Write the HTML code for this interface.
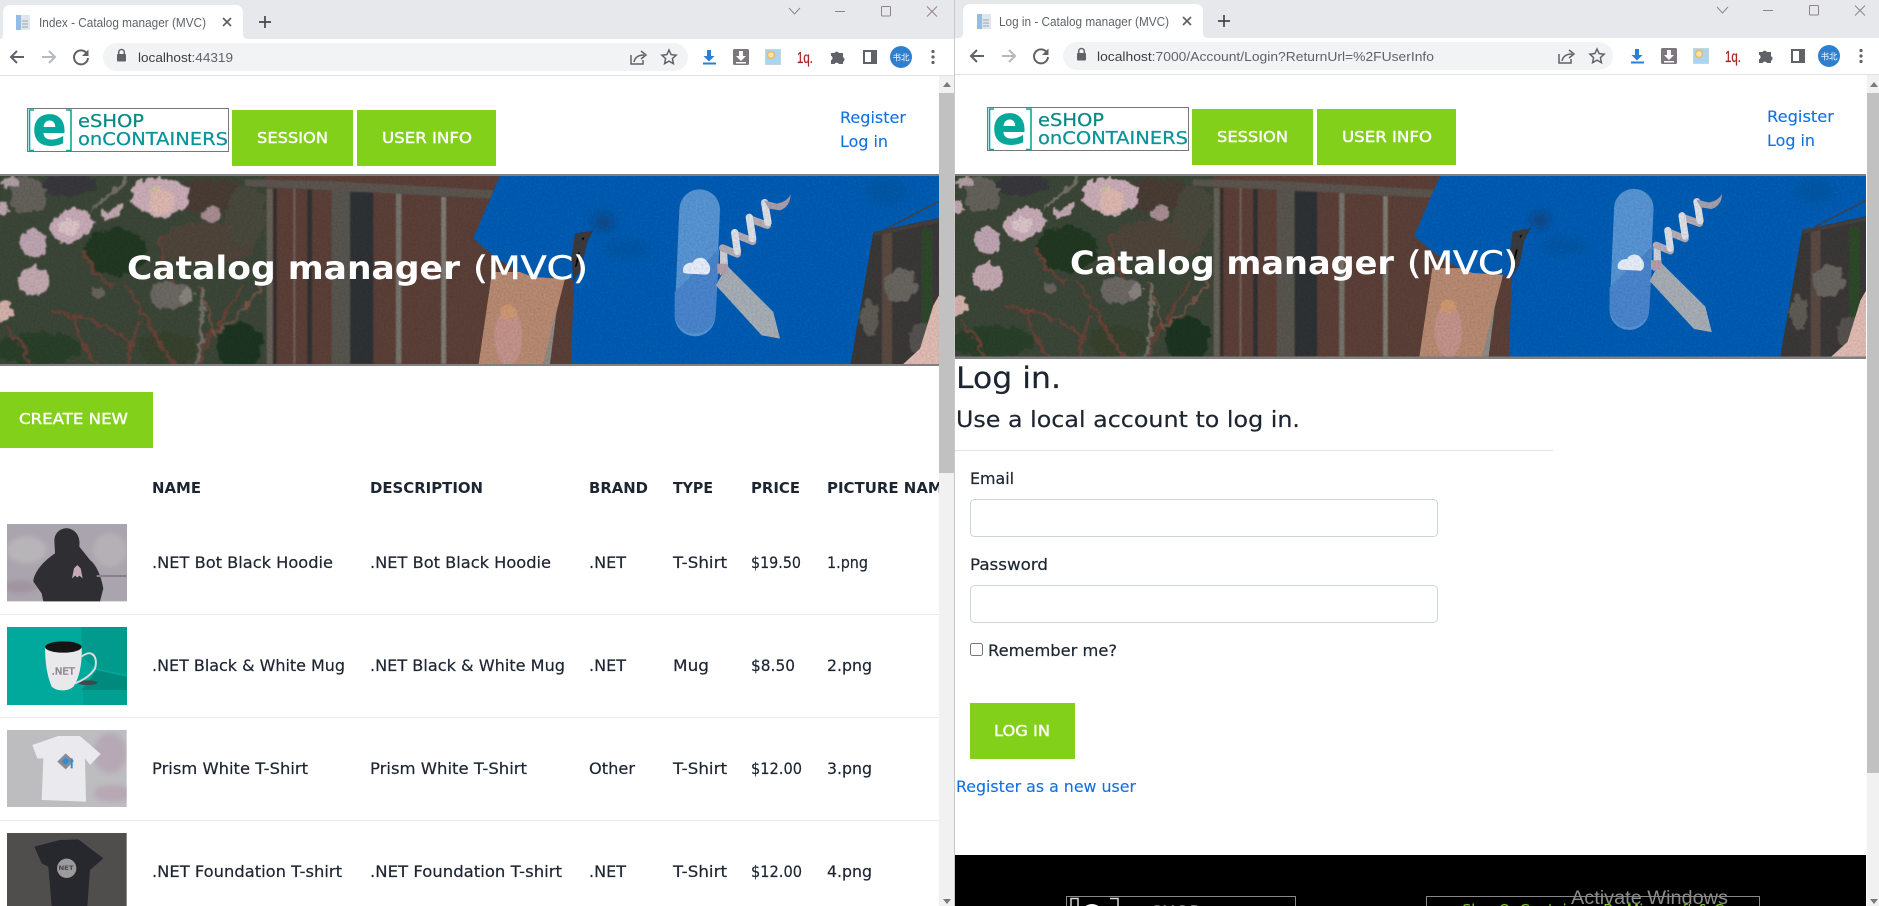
<!DOCTYPE html>
<html lang="en"><head><meta charset="utf-8"><title>Catalog manager (MVC)</title>
<style>
html,body{margin:0;padding:0;background:#fff;width:1879px;height:906px;overflow:hidden}
svg{display:block}
text{font-family:"DejaVu Sans","Liberation Sans",sans-serif;white-space:pre}
.c{font-family:"Liberation Sans",sans-serif;font-size:13px;fill:#5f6368}
.b{font-size:16px;fill:#1d2530;stroke:#1d2530;stroke-width:.2}
.h{font-size:15.5px;font-weight:700;fill:#1d2530}
.w{font-size:15.5px;fill:#fff;stroke:#fff;stroke-width:.4}
.l{font-size:16px;fill:#1271e0;stroke:#1271e0;stroke-width:.12}
.t{fill:#fff;font-size:32px}
.ic{fill:none;stroke:#5f6368;stroke-width:1.5}
</style></head><body>
<svg width="1879" height="906" viewBox="0 0 1879 906" xmlns="http://www.w3.org/2000/svg">
<defs>
<filter id="grain" x="0" y="0" width="100%" height="100%"><feTurbulence type="fractalNoise" baseFrequency="0.5" numOctaves="2" seed="4"/><feColorMatrix values="0 0 0 0 0  0 0 0 0 0  0 0 0 0 0  0 0 0 .9 -.28"/></filter>
<filter id="org" x="-5%" y="-5%" width="110%" height="110%"><feTurbulence type="fractalNoise" baseFrequency=".035" numOctaves="3" seed="7" result="n"/><feDisplacementMap in="SourceGraphic" in2="n" scale="34" xChannelSelector="R" yChannelSelector="G"/><feGaussianBlur stdDeviation="2"/></filter>
<filter id="sb" x="-5%" y="-5%" width="110%" height="110%"><feGaussianBlur stdDeviation="2.2"/></filter>
<filter id="sb2" x="-30%" y="-30%" width="160%" height="160%"><feGaussianBlur stdDeviation="14"/></filter>
<filter id="sb3" x="-30%" y="-30%" width="160%" height="160%"><feGaussianBlur stdDeviation="7"/></filter>
<clipPath id="hc"><rect x="0" y="12" width="2817" height="564"/></clipPath>
<clipPath id="th1"><rect x="21" y="72" width="360" height="232"/></clipPath>
<clipPath id="th3"><rect x="21" y="690" width="359" height="231"/></clipPath>
<g id="hero" clip-path="url(#hc)">
 <rect x="0" y="12" width="830" height="564" fill="#3c4738"/>
 <g filter="url(#org)">
 <ellipse cx="85" cy="70" rx="55" ry="55" fill="#65625c"/>
 <ellipse cx="210" cy="40" rx="85" ry="30" fill="#38393c"/>
 <ellipse cx="345" cy="240" rx="95" ry="70" fill="#203722"/>
 <ellipse cx="120" cy="530" rx="130" ry="50" fill="#2a4029"/>
 <ellipse cx="720" cy="520" rx="70" ry="70" fill="#1f3520"/>
 <ellipse cx="620" cy="70" rx="120" ry="50" fill="#4a3d36"/>
 <ellipse cx="620" cy="215" rx="150" ry="65" fill="#50443b"/>
 <ellipse cx="740" cy="130" rx="60" ry="90" fill="#4a4a3c"/>
 <ellipse cx="500" cy="530" rx="90" ry="50" fill="#38422f"/>
 <g fill="none" stroke="#6b4338" stroke-width="9">
  <path d="M380 340 C440 440 470 500 520 576M730 340 C680 430 620 500 600 576M160 420 C260 430 330 470 400 510M220 440 C240 500 270 550 290 576M640 470 C610 500 600 540 590 576M480 190 C480 260 500 300 530 340M20 470 C60 500 80 540 90 576M420 450 C400 490 390 540 385 576M250 240 C270 290 290 310 340 340"/>
  <path d="M590 340 C620 400 640 450 650 500M790 320 C760 390 720 420 650 480" stroke="#7a5448" stroke-width="7"/>
 </g>
 <g fill="none" stroke="#737068" stroke-width="10"><path d="M380 20 C340 60 320 80 270 110M610 350 C600 430 610 500 590 576"/></g>
 <ellipse cx="30" cy="30" rx="26" ry="16" fill="#b3a0a4"/><ellipse cx="10" cy="108" rx="18" ry="20" fill="#c0a8b0"/>
 <ellipse cx="335" cy="122" rx="38" ry="15" transform="rotate(-25 335 122)" fill="#c2a8b1"/>
 <ellipse cx="480" cy="75" rx="88" ry="58" fill="#cbaeb8"/>
 <ellipse cx="485" cy="90" rx="42" ry="36" fill="#deb9b1"/><ellipse cx="465" cy="52" rx="12" ry="9" fill="#cfc09b"/>
 <ellipse cx="215" cy="160" rx="66" ry="48" transform="rotate(-20 215 160)" fill="#c8acb7"/>
 <ellipse cx="205" cy="165" rx="32" ry="24" fill="#dcc5c9"/>
 <ellipse cx="100" cy="215" rx="38" ry="42" fill="#bfa6b2"/>
 <ellipse cx="102" cy="330" rx="48" ry="42" fill="#c4a9b1"/>
 <ellipse cx="10" cy="420" rx="28" ry="30" fill="#d6b2ab"/>
 <ellipse cx="635" cy="128" rx="30" ry="22" fill="#a98e92"/>
 <ellipse cx="510" cy="370" rx="65" ry="42" fill="#6c6864"/><ellipse cx="560" cy="375" rx="22" ry="18" fill="#8a847f"/>
 <ellipse cx="295" cy="365" rx="20" ry="18" fill="#67635d"/>
 </g>
 <g filter="url(#sb)">
 <rect x="800" y="0" width="950" height="600" fill="#5c3f37"/>
 <rect x="800" y="50" width="18" height="526" fill="#666259"/>
 <rect x="820" y="50" width="10" height="526" fill="#33302f"/>
 <rect x="922" y="50" width="14" height="526" fill="#2f3234"/>
 <rect x="995" y="30" width="55" height="546" fill="#585650"/>
 <rect x="1050" y="60" width="70" height="516" fill="#2d3035"/>
 <rect x="1188" y="65" width="16" height="511" fill="#77746c"/>
 <rect x="1324" y="75" width="14" height="501" fill="#807d75"/>
 <rect x="880" y="50" width="6" height="526" fill="#76645b"/>
 <path d="M735 22 L1000 28 L1480 55 L1480 80 L1000 55 L735 42Z" fill="#5c5750"/>
 <rect x="2530" y="0" width="300" height="600" fill="#3a3937"/>
 <rect x="2646" y="170" width="30" height="420" fill="#5a4c43"/>
 <rect x="2765" y="170" width="32" height="300" fill="#2e4a2c"/>
 </g>
 <g filter="url(#org)">
 <ellipse cx="2700" cy="340" rx="50" ry="50" fill="#696560"/>
 <ellipse cx="2610" cy="440" rx="26" ry="55" fill="#5f5b55"/><ellipse cx="2760" cy="500" rx="30" ry="50" fill="#575350"/>
 </g>
 <path d="M2710 576 L2760 530 L2800 400 L2817 370 L2817 576Z" fill="#e2bdb4"/>
 <path d="M1436 576 L1476 300 L1700 300 L1630 576Z" fill="#b98b73"/>
 <g filter="url(#sb)"><ellipse cx="1525" cy="495" rx="42" ry="85" fill="#c5948c"/><ellipse cx="1525" cy="420" rx="25" ry="22" fill="#cf9a72"/></g>
 <path d="M1630 576 L1672 400 L1650 576Z" fill="#8f8c86"/>
 <path d="M1500 12 L1420 198 Q1470 250 1560 300 L1600 315 L1722 322 L1713 576 L2552 576 L2620 180 L2817 138 L2817 12Z" fill="#015db5"/>
 <path d="M2620 180 L2817 140 L2817 152 L2625 192Z" fill="#45403e"/>
 <path d="M2660 170 L2817 88" fill="none" stroke="#3d4650" stroke-width="5"/>
 <g filter="url(#sb2)"><ellipse cx="1810" cy="150" rx="32" ry="26" fill="#0a4a88"/><ellipse cx="1880" cy="230" rx="70" ry="24" fill="#0456a6"/><ellipse cx="2660" cy="60" rx="60" ry="40" fill="#0558a8"/></g>
 <path d="M1725 185 L1780 175 L1760 215 L1745 290 L1720 330 L1715 250Z" fill="#3c3b3e"/><path d="M1745 200l8-5-3 10zM1735 240l-10 45 5-2 10-40z" fill="#000"/>
 <path fill="none" stroke="#5896d6" stroke-width="122" stroke-linecap="round" d="M2099 113 L2085 432"/>
 <path d="M2024 360 L2158 230 L2147 430 A62 62 0 0 1 2024 432Z" fill="#4a86cf"/>
 <path d="M2148 340 L2180 280 L2320 420 L2340 500 L2285 490Z" fill="#a8afb7"/>
 <path d="M2160 235 L2180 220 L2185 290 L2160 310Z" fill="#cfd2d8"/><path d="M2152 275h32v30h-32z" fill="#b79faa"/>
 <g fill="none" stroke-width="22" stroke-linecap="round">
  <path stroke="#b5adb8" d="M2168 228 L2212 246M2208 188 L2258 208M2252 142 L2302 160"/>
  <path stroke="#dfe2e8" d="M2204 182 L2212 238M2248 136 L2258 200M2294 92 L2304 152"/>
 </g>
 <path d="M2292 85 L2330 95 Q2360 90 2372 68 Q2370 105 2340 115 L2306 110Z" fill="#aaa1ac"/>
 <path d="M2050 302 C2045 282 2060 270 2078 272 C2082 258 2110 248 2122 270 C2135 282 2132 305 2120 308 L2060 305Z" fill="#e7f0fc"/>
</g>
</defs>

<!-- browser chrome left -->
<rect width="955" height="39" fill="#e7e8eb"/>
<rect y="39" width="955" height="36" fill="#fff"/>
<rect y="75" width="955" height="1" fill="#dfe1e4"/>
<path d="M0 39 Q3 39 3 34 V13 Q3 5 11 5 H235 Q243 5 243 13 V34 Q243 39 248 39Z" fill="#fff"/>
<rect x="16" y="15" width="14" height="15" fill="#dfe6ee"/><rect x="16" y="15" width="5" height="15" fill="#93bde8"/><path d="M22 21h6M22 24h6M22 27h6" stroke="#9aa3ad"/>
<text class="c" x="39" y="27" textLength="167" lengthAdjust="spacingAndGlyphs">Index - Catalog manager (MVC)</text>
<path d="M223 18l8 8M231 18l-8 8" stroke="#5f6368" stroke-width="1.7"/>
<path d="M265 16v12M259 22h12" stroke="#44474a" stroke-width="1.7"/>
<rect x="103" y="43" width="585" height="28" rx="14" fill="#f1f3f4"/>
<g fill="none" stroke-width="2">
 <path d="M24 57H11M17 51l-6 6 6 6" stroke="#5f6368"/><path d="M42 57H55M49 51l6 6-6 6" stroke="#b6b9bd"/>
 <path d="M86.5 53 A7 7 0 1 0 88 58" stroke="#5f6368"/>
</g>
<path d="M88.5 49.5V56H82Z" fill="#5f6368"/>
<rect x="117" y="54" width="9" height="7.5" rx="1" fill="#5f6368"/><path d="M118.7 54v-1.7a2.8 2.8 0 0 1 5.6 0V54" class="ic" stroke-width="1.2"/>
<text x="138" y="62" class="c" textLength="95" lengthAdjust="spacingAndGlyphs"><tspan fill="#3b3d40">localhost</tspan>:44319</text>

<g id="tb">
 <path class="ic" d="M631 55V64H643V60M634 62C635 57 639 55 644 55M641 51L646 55L641 59" stroke-width="1.3"/>
 <path class="ic" d="M669 50l2.1 4.6 5 .6-3.7 3.4 1 5-4.4-2.5-4.4 2.5 1-5-3.7-3.4 5-.6z"/>
 <path d="M707 50h4v6h3.5L709 61.5 703.5 56H707zM703 62.5h13v2h-13z" fill="#2b7fd8"/>
 <rect x="733" y="49" width="16" height="16" rx="1.5" fill="#7b777d"/><path d="M739 51h4v5h3l-5 5-5-5h3zM736 62h10v1.5h-10z" fill="#fff"/>
 <rect x="765" y="49" width="16" height="16" fill="#a8d6ee"/><rect x="765.5" y="49.5" width="15" height="15" fill="none" stroke="#c4d6e0"/><circle cx="771" cy="55" r="3.5" fill="#f5e6a8" stroke="#efb95f" stroke-width="1.5"/>
 <text x="797" y="63" style="font-family:'Liberation Sans',sans-serif;font-size:16px;fill:#a8282a;stroke:#a8282a;stroke-width:.3" textLength="16" lengthAdjust="spacingAndGlyphs">1q.</text>
 <path d="M831 53h3.5a2.5 2.5 0 0 1 4.5 0H843v4.2a2.5 2.5 0 0 1 0 4.6V64H839a2.5 2.5 0 0 0-4.5 0H831v-3.7a2.5 2.5 0 0 0 0-4.6z" fill="#5f6368"/>
 <rect x="864" y="51" width="12" height="12" fill="none" stroke="#5f6368" stroke-width="2"/><rect x="871" y="51" width="5" height="12" fill="#5f6368"/>
 <circle cx="901" cy="57" r="11" fill="#2f7fd0"/>
 <text x="901" y="60.5" text-anchor="middle" style="font-family:'Noto Sans CJK SC',sans-serif;font-size:8.5px;fill:#fff">书北</text>
 <circle cx="933" cy="51.5" r="1.6" fill="#5f6368"/><circle cx="933" cy="57" r="1.6" fill="#5f6368"/><circle cx="933" cy="62.5" r="1.6" fill="#5f6368"/>
 <g fill="none" stroke="#8f828f" stroke-width="1">
  <path d="M789 8l5.5 6 5.5-6M835 11.5h10M927 6.5l10 10M937 6.5l-10 10"/><rect x="881.5" y="6.5" width="9" height="9.5" rx="1"/>
 </g>
</g>

<!-- left page -->
<g id="hdr">
 <rect x="27.5" y="108.5" width="201" height="43" fill="#fff" stroke="#777"/>
 <path d="M34 110H29.5V150.5H34M66 110H71V150.5H66" fill="none" stroke="#0aa79b" stroke-width="1.6"/>
 <text x="32" y="145" style="font-size:55px;font-weight:700;fill:#07a89c" textLength="35" lengthAdjust="spacingAndGlyphs">e</text>
 <text x="78" y="127" style="font-size:17.5px;fill:#0b8a86;stroke:#0b8a86;stroke-width:.25" textLength="66" lengthAdjust="spacingAndGlyphs">eSHOP</text>
 <text x="78" y="145" style="font-size:17.5px;fill:#0b939b;stroke:#0b939b;stroke-width:.25" textLength="150" lengthAdjust="spacingAndGlyphs">onCONTAINERS</text>
 <rect x="232" y="110" width="121" height="56" fill="#83d01b"/><rect x="357" y="110" width="139" height="56" fill="#83d01b"/>
 <text class="w" x="257" y="143" textLength="71" lengthAdjust="spacingAndGlyphs">SESSION</text>
 <text class="w" x="382" y="143" textLength="90" lengthAdjust="spacingAndGlyphs">USER INFO</text>
</g>
<text class="l" x="840" y="123" textLength="66" lengthAdjust="spacingAndGlyphs">Register</text>
<text class="l" x="840" y="147" textLength="48" lengthAdjust="spacingAndGlyphs">Log in</text>

<rect y="174" width="939" height="192" fill="#808080"/>
<g transform="translate(0,172) scale(.33333)"><use href="#hero"/></g>
<rect x="0" y="176" width="939" height="188" filter="url(#grain)" opacity=".22"/>
<text class="t" x="127" y="279" font-weight="700" textLength="333" lengthAdjust="spacingAndGlyphs">Catalog manager</text>
<text class="t" x="473" y="279" style="stroke:#fff;stroke-width:.5" textLength="115" lengthAdjust="spacingAndGlyphs">(MVC)</text>

<rect x="0" y="392" width="153" height="56" fill="#83d01b"/>
<text class="w" x="19" y="424" textLength="109" lengthAdjust="spacingAndGlyphs">CREATE NEW</text>

<text class="h" x="152" y="493" textLength="49" lengthAdjust="spacingAndGlyphs">NAME</text>
<text class="h" x="370" y="493" textLength="113" lengthAdjust="spacingAndGlyphs">DESCRIPTION</text>
<text class="h" x="589" y="493" textLength="59" lengthAdjust="spacingAndGlyphs">BRAND</text>
<text class="h" x="673" y="493" textLength="40" lengthAdjust="spacingAndGlyphs">TYPE</text>
<text class="h" x="751" y="493" textLength="49" lengthAdjust="spacingAndGlyphs">PRICE</text>
<text class="h" x="827" y="493" textLength="126" lengthAdjust="spacingAndGlyphs">PICTURE NAME</text>

<path d="M0 614.5H939M0 717.5H939M0 820.5H939" stroke="#e9ecef"/>

<text class="b" x="152" y="568" textLength="181" lengthAdjust="spacingAndGlyphs">.NET Bot Black Hoodie</text>
<text class="b" x="370" y="568" textLength="181" lengthAdjust="spacingAndGlyphs">.NET Bot Black Hoodie</text>
<text class="b" x="589" y="568" textLength="37" lengthAdjust="spacingAndGlyphs">.NET</text>
<text class="b" x="673" y="568" textLength="54" lengthAdjust="spacingAndGlyphs">T-Shirt</text>
<text class="b" x="751" y="568" textLength="50" lengthAdjust="spacingAndGlyphs">$19.50</text>
<text class="b" x="827" y="568" textLength="41" lengthAdjust="spacingAndGlyphs">1.png</text>
<text class="b" x="152" y="671" textLength="193" lengthAdjust="spacingAndGlyphs">.NET Black &amp; White Mug</text>
<text class="b" x="370" y="671" textLength="195" lengthAdjust="spacingAndGlyphs">.NET Black &amp; White Mug</text>
<text class="b" x="589" y="671" textLength="37" lengthAdjust="spacingAndGlyphs">.NET</text>
<text class="b" x="673" y="671" textLength="36" lengthAdjust="spacingAndGlyphs">Mug</text>
<text class="b" x="751" y="671" textLength="44" lengthAdjust="spacingAndGlyphs">$8.50</text>
<text class="b" x="827" y="671" textLength="45" lengthAdjust="spacingAndGlyphs">2.png</text>
<text class="b" x="152" y="774" textLength="156" lengthAdjust="spacingAndGlyphs">Prism White T-Shirt</text>
<text class="b" x="370" y="774" textLength="157" lengthAdjust="spacingAndGlyphs">Prism White T-Shirt</text>
<text class="b" x="589" y="774" textLength="46" lengthAdjust="spacingAndGlyphs">Other</text>
<text class="b" x="673" y="774" textLength="54" lengthAdjust="spacingAndGlyphs">T-Shirt</text>
<text class="b" x="751" y="774" textLength="51" lengthAdjust="spacingAndGlyphs">$12.00</text>
<text class="b" x="827" y="774" textLength="45" lengthAdjust="spacingAndGlyphs">3.png</text>
<text class="b" x="152" y="877" textLength="190" lengthAdjust="spacingAndGlyphs">.NET Foundation T-shirt</text>
<text class="b" x="370" y="877" textLength="192" lengthAdjust="spacingAndGlyphs">.NET Foundation T-shirt</text>
<text class="b" x="589" y="877" textLength="37" lengthAdjust="spacingAndGlyphs">.NET</text>
<text class="b" x="673" y="877" textLength="54" lengthAdjust="spacingAndGlyphs">T-Shirt</text>
<text class="b" x="751" y="877" textLength="51" lengthAdjust="spacingAndGlyphs">$12.00</text>
<text class="b" x="827" y="877" textLength="45" lengthAdjust="spacingAndGlyphs">4.png</text>

<!-- thumbnails -->
<g transform="translate(0,500) scale(.33333)">
 <rect x="21" y="72" width="360" height="232" fill="#aaa4ae"/>
 <g clip-path="url(#th1)"><g filter="url(#sb3)"><ellipse cx="80" cy="150" rx="60" ry="40" fill="#b8b5b9"/><ellipse cx="330" cy="150" rx="50" ry="50" fill="#b5b0b6"/><ellipse cx="60" cy="260" rx="55" ry="18" fill="#a0949f"/></g></g>
 <path d="M163 120 C165 95 185 83 205 85 C228 90 242 110 238 140 L270 180 C295 200 305 240 310 265 L300 304 L130 304 L125 280 L100 245 C100 225 120 190 165 160 Z" fill="#2f2f33"/>
 <path d="M232 195l10 10 6 30-10-8-6 6-6-6-10 8 6-30z" fill="#c5a9b8"/>
 <path d="M290 225h90v6h-90z" fill="#8b7f8b"/>
 <rect x="21" y="381" width="360" height="234" fill="#00a99b"/>
 <path d="M245 381H381V525L290 505L245 470Z" fill="#019a8d"/>
 <path d="M245 570 L290 510 L381 530V570Z" fill="#008a7d"/>
 <path d="M250 570H381V615H250Z" fill="#019e92"/>
 <ellipse cx="262" cy="548" rx="30" ry="7" fill="#3b4a4c"/>
 <path d="M245 470 C275 445 295 470 285 505 C270 530 240 545 225 550" fill="none" stroke="#dcdcde" stroke-width="6"/>
 <path d="M135 440 H245 C247 490 238 535 220 560 C205 575 170 575 155 560 C142 530 135 490 135 440Z" fill="#e9e9ec"/>
 <ellipse cx="190" cy="441" rx="55" ry="17" fill="#151515"/>
 <text x="155" y="523" style="font-size:30px;fill:#8f8490;stroke:#8f8490;stroke-width:1.5" textLength="70" lengthAdjust="spacingAndGlyphs">.NET</text>
 <rect x="21" y="690" width="359" height="231" fill="#bdbcbf"/>
 <g clip-path="url(#th3)"><g filter="url(#sb3)"><ellipse cx="330" cy="760" rx="50" ry="60" fill="#b6a9b5"/><ellipse cx="340" cy="880" rx="60" ry="25" fill="#b7a8b5"/></g></g>
 <path d="M97 735 L175 708 L240 708 L302 762 L270 795 L255 775 L258 905 L125 900 L130 775 L112 775Z" fill="#eaeaee"/>
 <path d="M197 760l25 23-25 25-25-23z" fill="#8f8890"/><path d="M197 772l12 11-12 12-12-11z" fill="#2b8fd8"/><path d="M212 775h6v30h-6z" fill="#2b8fd8"/>
 <rect x="21" y="999" width="359" height="219" fill="#504e4c"/>
 <path d="M103 1040 L180 1020 L235 1018 L310 1075 L270 1110 L262 1218 L155 1218 L145 1100 L125 1090Z" fill="#26282e"/>
 <circle cx="200" cy="1105" r="29" fill="#9c9a9a"/>
 <text x="175" y="1110" style="font-size:18px;font-weight:700;fill:#4a4a4e" textLength="46" lengthAdjust="spacingAndGlyphs">NET</text>
</g>

<!-- left scrollbar -->
<rect x="939" y="76" width="15" height="830" fill="#f1f1f1"/>
<rect x="939" y="93" width="15" height="380" fill="#c1c1c1"/>
<path d="M943 87l4-5 4 5zM943 899l4 5 4-5z" fill="#7a7a7a"/>
<rect x="954" y="0" width="1" height="906" fill="#c9c9cb"/>

<!-- right window -->
<rect x="955" width="924" height="38" fill="#e7e8eb"/>
<rect x="955" y="38" width="924" height="868" fill="#fff"/>
<rect x="955" y="74" width="924" height="1" fill="#dfe1e4"/>
<path d="M958 38 Q963 38 963 33 V12 Q963 4 971 4 H1195 Q1203 4 1203 12 V33 Q1203 38 1208 38Z" fill="#fff"/>
<rect x="977" y="14" width="14" height="15" fill="#dfe6ee"/><rect x="977" y="14" width="5" height="15" fill="#93bde8"/><path d="M983 20h6M983 23h6M983 26h6" stroke="#9aa3ad"/>
<text class="c" x="999" y="26" textLength="170" lengthAdjust="spacingAndGlyphs">Log in - Catalog manager (MVC)</text>
<path d="M1183 17l8 8M1191 17l-8 8" stroke="#5f6368" stroke-width="1.7"/>
<path d="M1224 15v12M1218 21h12" stroke="#44474a" stroke-width="1.7"/>
<rect x="1063" y="42" width="550" height="28" rx="14" fill="#f1f3f4"/>
<g fill="none" stroke-width="2" transform="translate(960,-1)">
 <path d="M24 57H11M17 51l-6 6 6 6" stroke="#5f6368"/><path d="M42 57H55M49 51l6 6-6 6" stroke="#b6b9bd"/>
 <path d="M86.5 53 A7 7 0 1 0 88 58" stroke="#5f6368"/>
</g>
<path d="M1048.5 48.5V55H1042Z" fill="#5f6368"/>
<g transform="translate(960,-1)"><rect x="117" y="54" width="9" height="7.5" rx="1" fill="#5f6368"/><path d="M118.7 54v-1.7a2.8 2.8 0 0 1 5.6 0V54" class="ic" stroke-width="1.2"/></g>
<text x="1097" y="61" class="c" textLength="337" lengthAdjust="spacingAndGlyphs"><tspan fill="#3b3d40">localhost</tspan>:7000/Account/Login?ReturnUrl=%2FUserInfo</text>
<use href="#tb" transform="translate(928,-1)"/>

<use href="#hdr" transform="translate(960,-1)"/>
<text class="l" x="1767" y="122" textLength="67" lengthAdjust="spacingAndGlyphs">Register</text>
<text class="l" x="1767" y="146" textLength="48" lengthAdjust="spacingAndGlyphs">Log in</text>

<rect x="955" y="174" width="911" height="185" fill="#808080"/>
<g transform="translate(955,176) scale(.32340,.32) translate(0,-12)"><use href="#hero"/></g>
<rect x="955" y="176" width="911" height="181" filter="url(#grain)" opacity=".22"/>
<text class="t" x="1070" y="274" font-weight="700" textLength="324" lengthAdjust="spacingAndGlyphs">Catalog manager</text>
<text class="t" x="1407" y="274" style="stroke:#fff;stroke-width:.5" textLength="111" lengthAdjust="spacingAndGlyphs">(MVC)</text>

<text x="956" y="388" style="font-size:29px;fill:#1d2530;stroke:#1d2530;stroke-width:.2" textLength="105" lengthAdjust="spacingAndGlyphs">Log in.</text>
<text x="956" y="427" style="font-size:22.5px;fill:#1d2530;stroke:#1d2530;stroke-width:.2" textLength="344" lengthAdjust="spacingAndGlyphs">Use a local account to log in.</text>
<rect x="955" y="450" width="598" height="1" fill="#dfe3e8"/>
<text class="b" x="970" y="484" textLength="44" lengthAdjust="spacingAndGlyphs">Email</text>
<rect x="970.5" y="499.5" width="467" height="37" rx="4" fill="#fff" stroke="#ced4da"/>
<text class="b" x="970" y="570" textLength="78" lengthAdjust="spacingAndGlyphs">Password</text>
<rect x="970.5" y="585.5" width="467" height="37" rx="4" fill="#fff" stroke="#ced4da"/>
<rect x="970.5" y="643.5" width="12" height="12" rx="2" fill="#fff" stroke="#767676"/>
<text class="b" x="988" y="656" textLength="129" lengthAdjust="spacingAndGlyphs">Remember me?</text>
<rect x="970" y="703" width="105" height="56" fill="#83d01b"/>
<text class="w" x="994" y="736" textLength="56" lengthAdjust="spacingAndGlyphs">LOG IN</text>
<text class="l" x="956" y="792" textLength="180" lengthAdjust="spacingAndGlyphs">Register as a new user</text>

<rect x="955" y="855" width="911" height="51" fill="#000"/>
<rect x="1066.5" y="896.5" width="229" height="20" fill="none" stroke="#888"/>
<path d="M1078 908V898.5H1071V920M1110 898.5H1118V920" fill="none" stroke="#d8d8d8" stroke-width="1.5"/>
<circle cx="1092" cy="915" r="11" fill="#fff"/>
<text x="1140" y="917" style="font-size:16px;fill:#fff" textLength="60" lengthAdjust="spacingAndGlyphs">eSHOP</text>
<rect x="1426.5" y="896.5" width="333" height="20" fill="none" stroke="#888"/>
<text x="1453" y="915" style="font-size:15px;fill:#83d01b" textLength="280" lengthAdjust="spacingAndGlyphs">eShopOnContainers By Microsoft &amp; Co</text>
<text x="1571" y="904" style="font-family:'Liberation Sans',sans-serif;font-size:19px;fill:#8c8c8c" textLength="157" lengthAdjust="spacingAndGlyphs">Activate Windows</text>

<!-- right scrollbar -->
<rect x="1867" y="75" width="12" height="831" fill="#f1f1f1"/>
<rect x="1867" y="93" width="12" height="680" fill="#c1c1c1"/>
<path d="M1870 87l4-5 4 5zM1870 899l4 5 4-5z" fill="#7a7a7a"/>
</svg>
</body></html>
